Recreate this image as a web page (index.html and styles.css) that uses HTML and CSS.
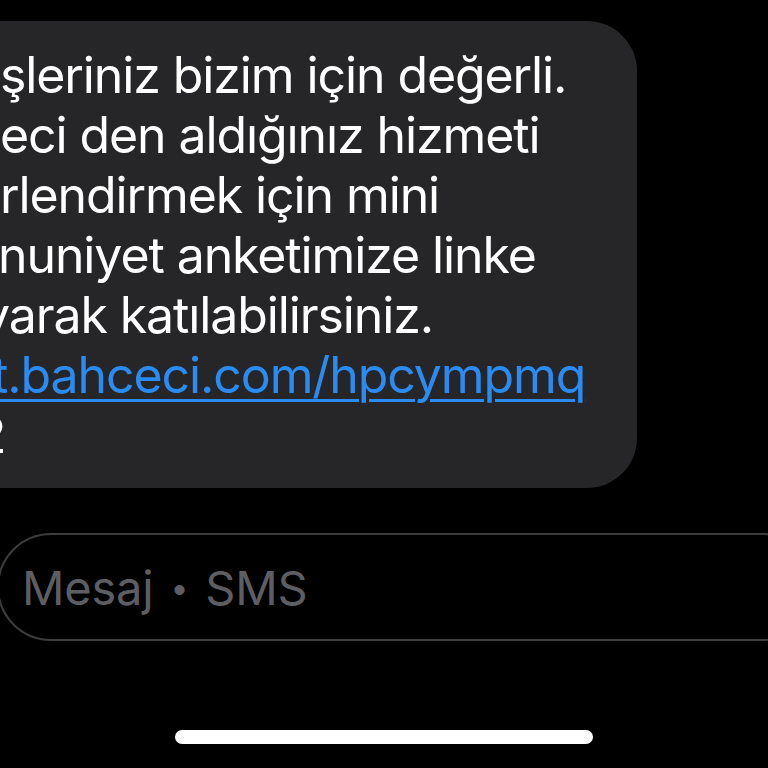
FILE: index.html
```html
<!DOCTYPE html>
<html lang="tr">
<head>
  <meta charset="UTF-8">
  <meta name="viewport" content="width=device-width, initial-scale=1.0">
  <title>Mesajlar</title>
  <link rel="stylesheet" href="styles.css">
</head>
<body>

  <!-- Conversation -->
  <div class="thread">
    <div class="bubble">
      <div class="line l1">şleriniz bizim için değerli.</div>
      <div class="line l2">eci den aldığınız hizmeti</div>
      <div class="line l3">rlendirmek için mini</div>
      <div class="line l4">nuniyet anketimize linke</div>
      <div class="line l5">yarak katılabilirsiniz.</div>
      <div class="line l6"><a href="#">t.bahceci.com/hpcympmq</a></div>
      <div class="line l7"><span>2</span></div>
    </div>
  </div>

  <!-- Compose field -->
  <div class="compose">
    <div class="field">
      <span class="placeholder">Mesaj <span class="dot">•</span> SMS</span>
    </div>
  </div>

  <!-- Home indicator -->
  <div class="home-bar"></div>

</body>
</html>
```

FILE: styles.css
```css
* {
  margin: 0;
  padding: 0;
  box-sizing: border-box;
}

body {
  background: #000;
  color: #fff;
  font-family: Inter, "Noto Sans", sans-serif;
  width: 768px;
  height: 768px;
  overflow: hidden;
}

.thread {
  padding-top: 21px;
}

.bubble {
  margin-left: -60px;
  width: 697px;
  padding: 24px 0 23px 60px;
  background: #262628;
  border-radius: 50px;
  overflow: hidden;
}

.line {
  font-size: 50px;
  line-height: 60px;
  white-space: nowrap;
  letter-spacing: -1.1px;
}

.l1 { margin-left: 0; }
.l2 { margin-left: 0; }
.l3 { margin-left: 0; }
.l4 { margin-left: -2px; }
.l5 { margin-left: -18px; }
.l6 { margin-left: -8px; }
.l7 { margin-left: -24px; }

.line a {
  color: #2a8cf2;
  text-decoration: underline;
  text-decoration-thickness: 3px;
  text-underline-offset: 6px;
}

.compose {
  margin-top: 45px;
}

.field {
  margin-left: -3px;
  width: 820px;
  height: 108px;
  border: 2px solid #3c3c3f;
  border-radius: 54px;
  display: flex;
  align-items: center;
  padding-left: 23px;
}

.placeholder {
  font-size: 47px;
  color: #5e5e62;
  letter-spacing: -0.2px;
}

.dot {
  font-size: 32px;
  vertical-align: 6px;
  padding: 0 4px;
}

.home-bar {
  width: 418px;
  height: 14px;
  margin: 89px auto 0;
  background: #fff;
  border-radius: 7px;
}
```
